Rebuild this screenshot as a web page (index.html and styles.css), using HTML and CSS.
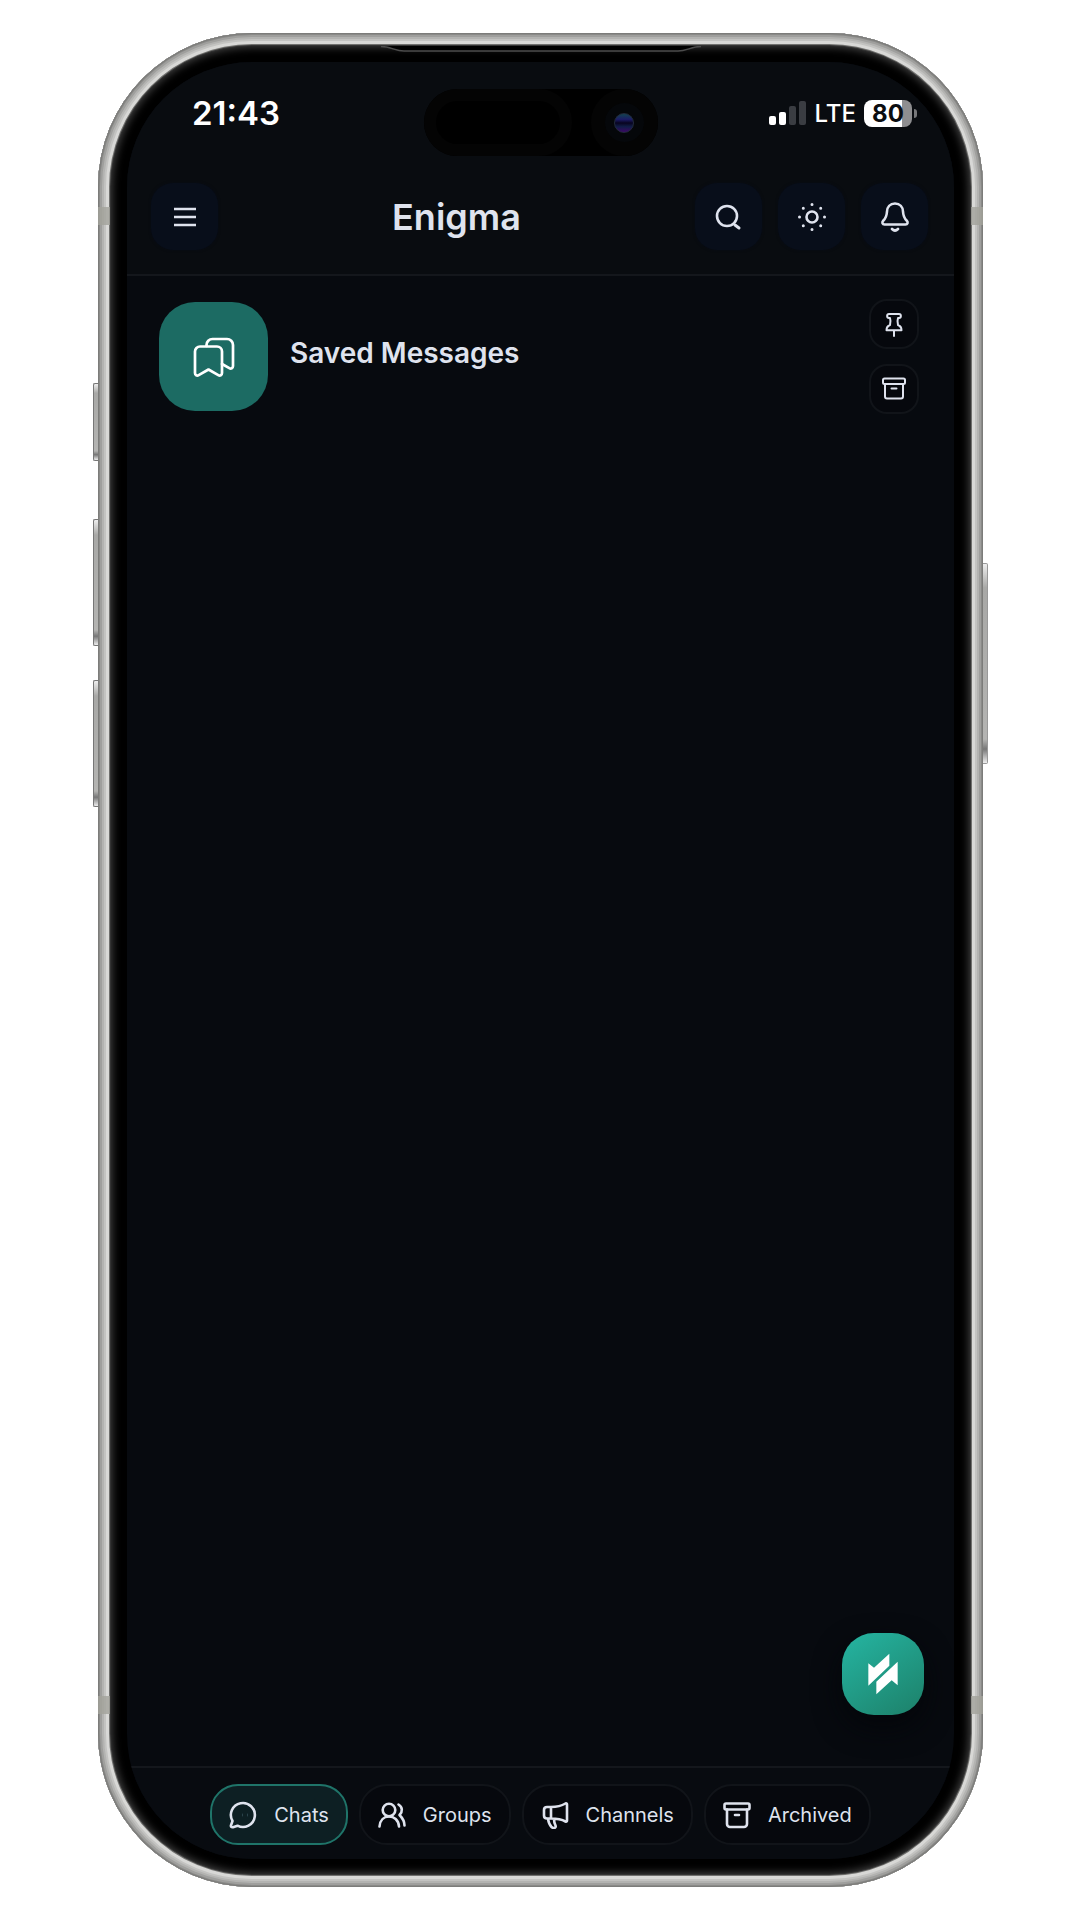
FILE: index.html
```html
<!DOCTYPE html>
<html lang="en">
<head>
<meta charset="utf-8">
<meta name="viewport" content="width=device-width, initial-scale=1">
<title>Enigma</title>
<link rel="stylesheet" href="styles.css">
</head>
<body>
<div class="phone">
  <span class="side-key side-key-action"></span>
  <span class="side-key side-key-up"></span>
  <span class="side-key side-key-down"></span>
  <span class="side-key side-key-power"></span>
  <span class="band band-top-left"></span>
  <span class="band band-top-right"></span>
  <span class="band band-bottom-left"></span>
  <span class="band band-bottom-right"></span>
  <svg class="earpiece" viewBox="0 0 320 12" aria-hidden="true">
    <path d="M0 0H320C310 0 306 5 297 5H23C14 5 10 0 0 0Z" fill="#000"/>
    <path d="M0 0.500C10 0.500 14 5 23 5H297C306 5 310 0.500 320 0.500" fill="none" stroke="#4c4c4c" stroke-width="1.5"/>
  </svg>

  <div class="screen">
    <div class="island">
      <span class="sensor"></span>
      <span class="camera"><span class="lens"></span></span>
    </div>
    <header class="top">
      <div class="status">
        <time class="clock">21:43</time>
        <div class="status-right">
          <svg class="signal" viewBox="0 0 38 26" aria-hidden="true">
            <rect x="0" y="16" width="7" height="9" rx="2" fill="#fff"/>
            <rect x="10" y="12" width="7" height="13" rx="2" fill="#fff"/>
            <rect x="20" y="6" width="7" height="19" rx="2" fill="#3a3d42"/>
            <rect x="30" y="1" width="7" height="24" rx="2" fill="#3a3d42"/>
          </svg>
          <span class="network">LTE</span>
          <span class="battery">80</span>
        </div>
      </div>
      <div class="toolbar">
        <button class="tool" type="button" aria-label="Menu">
          <svg class="icon icon-tool" viewBox="0 0 32 32"><path d="M5 8h22M5 16h22M5 24h22" stroke-linecap="butt"/></svg>
        </button>
        <h1 class="title">Enigma</h1>
        <div class="tools">
          <button class="tool" type="button" aria-label="Search">
            <svg class="icon icon-tool" viewBox="0 0 32 32"><circle cx="14" cy="15" r="10"/><path d="M22 24l4 3" stroke-width="3"/></svg>
          </button>
          <button class="tool" type="button" aria-label="Theme">
            <svg class="icon icon-tool" viewBox="0 0 32 32"><circle cx="16" cy="16" r="5.500"/><path d="M16 3.500h.01M16 28.500h.01M3.500 16h.01M28.500 16h.01M7.300 7.300h.01M24.700 7.300h.01M7.300 24.700h.01M24.700 24.700h.01" stroke-width="3"/></svg>
          </button>
          <button class="tool" type="button" aria-label="Notifications">
            <svg class="icon icon-tool" viewBox="0 0 32 32"><path d="M16 2.500C11 2.500 8.200 6 8 10.500c-.2 4.700-1.300 6.800-3.800 9.200C2.600 21.500 3.500 23.500 5.500 23.500h21c2 0 2.900-2 1.300-3.800C25.300 17.300 24.200 15.200 24 10.500 23.800 6 21 2.500 16 2.500Z"/><path d="M13 28q3 3 6 0"/></svg>
          </button>
        </div>
      </div>
    </header>

    <main class="chats">
      <article class="chat">
        <div class="avatar">
          <svg class="icon icon-avatar" viewBox="0 0 44 44"><path d="M8 11.500h17a5 5 0 0 1 5 5V38c0 2.200-2 3.200-3.700 2.100L16.500 34.500 6.700 40.100C5 41.200 3 40.200 3 38V16.500a5 5 0 0 1 5-5Z"/><path d="M14.500 11v-1a6 6 0 0 1 6-6H35a6 6 0 0 1 6 6v21c0 2.200-2 3.200-3.700 2.200L30 29"/></svg>
        </div>
        <h2 class="chat-name">Saved Messages</h2>
        <div class="chat-actions">
          <button class="action" type="button" aria-label="Pin">
            <svg class="icon icon-action" viewBox="0 0 30 30"><path d="M10 5h10c2.500 0 2.500 4 0 4h-1c-.8 2.500-.6 5 0 7 2 .8 3.500 2 3.500 5.200h-15c0-3.200 1.500-4.400 3.500-5.200.6-2 .8-4.500 0-7h-1c-2.500 0-2.500-4 0-4ZM15 21.500v5.500"/></svg>
          </button>
          <button class="action" type="button" aria-label="Archive">
            <svg class="icon icon-action" viewBox="0 0 30 30"><rect x="4" y="4.500" width="22" height="5.500" rx="1.500"/><path d="M6 10v12.500a2 2 0 0 0 2 2h14a2 2 0 0 0 2-2V10M12.500 14.500h5"/></svg>
          </button>
        </div>
      </article>
      <button class="compose" type="button" aria-label="New">
        <svg class="logo" viewBox="183 156 132 132"><path d="M205 190L222 203 268 161V197L205 257ZM229 283V245L293 185V256L275 241Z" fill="#fff"/></svg>
      </button>
    </main>

    <nav class="tabs" aria-label="Sections">
      <button class="tab tab-active" type="button">
        <svg class="icon icon-tab" viewBox="0 0 28 28"><path d="M3.500 20A12 12 0 1 1 8.500 24.700L4 26.200C2.500 26.600 1.600 25.700 2 24.200Z"/><path d="M13.500 13v2M18.500 13v2" stroke="#29424a" stroke-width="1"/></svg>
        <span>Chats</span>
      </button>
      <button class="tab" type="button">
        <svg class="icon icon-tab" viewBox="0 0 28 28"><circle cx="11" cy="9" r="6.300"/><path d="M1.500 25.500C2 19 6 15.500 11 15.500S20.500 19 21 25.500M20.500 3.500C24.500 6 25 10.500 21.500 14 24.500 17 26.500 20.500 26.500 24.500"/></svg>
        <span>Groups</span>
      </button>
      <button class="tab" type="button">
        <svg class="icon icon-tab" viewBox="0 0 28 28"><path d="M10 6H6C4 6 3 7 3 9v5.500c0 2 1 3 3 3h4ZM10 6c6 0 10-.8 14.500-3.500C25.500 2 26 2.500 26 3.500v16c0 1-.5 1.500-1.500 1C20 18 16 17.500 10 17.500M7 18c.5 3 1.500 6 3.500 8 2 2 5 1 4-1.500-1-2-1.500-4-1.500-6.500"/></svg>
        <span>Channels</span>
      </button>
      <button class="tab" type="button">
        <svg class="icon icon-tab" viewBox="0 0 28 28"><rect x="1.500" y="2.500" width="25" height="6" rx="1.500"/><path d="M4 8.500V23a3 3 0 0 0 3 3h14a3 3 0 0 0 3-3V8.500M12 14h4"/></svg>
        <span>Archived</span>
      </button>
    </nav>
  </div>
</div>
</body>
</html>
```
FILE: styles.css
```css
* {
  box-sizing: border-box;
}

body {
  margin: 0;
  padding: 33px 97px 33px 98px;
  background: #fff;
  color: #dfe3ee;
  font-family: Inter, sans-serif;
}

button {
  margin: 0;
  padding: 0;
  border: 0;
  color: inherit;
  font: inherit;
}

/* Metal frame, shaded from the outer edge inwards */
.phone {
  position: relative;
  display: flex;
  min-height: calc(100vh - 66px);
  padding: 29px 29px 28px;
  border-radius: 154px;
  background: #000;
  box-shadow:
    inset 0 0 0 1px #7c7c7a,
    inset 0 0 0 2px #8a8a88,
    inset 0 0 0 4px #9f9f9d,
    inset 0 0 0 6px #b3b3b1,
    inset 0 0 0 8px #c3c3c1,
    inset 0 0 0 11px #d8d8d6,
    inset 0 0 0 12px #70706e,
    inset 0 0 0 13px #333,
    inset 0 0 8px 14px #444;
}

.side-key {
  position: absolute;
  left: -5px;
  width: 5px;
  border: 1px solid #777;
  border-right: 0;
  border-radius: 2px 0 0 2px;
  background: linear-gradient(#eee, #a8a8a6 12%, #b4b4b2 88%, #777 93%, #eee);
}

.side-key-action { top: 350px; height: 78px; }
.side-key-up { top: 486px; height: 127px; }
.side-key-down { top: 647px; height: 127px; }

.side-key-power {
  top: 530px;
  right: -5px;
  left: auto;
  height: 201px;
  border: 1px solid #999;
  border-left: 0;
  border-radius: 0 2px 2px 0;
}

.band {
  position: absolute;
  width: 12px;
  height: 18px;
  background: #a3a39b;
  opacity: 0.8;
}

.band-top-left { top: 174px; left: 0; }
.band-top-right { top: 174px; right: 0; }
.band-bottom-left { bottom: 173px; left: 0; }
.band-bottom-right { bottom: 173px; right: 0; }

.earpiece {
  position: absolute;
  top: 13px;
  left: 50%;
  width: 320px;
  height: 12px;
  transform: translateX(-50%);
}

.screen {
  position: relative;
  display: flex;
  flex: 1;
  flex-direction: column;
  overflow: hidden;
  border-radius: 125px;
  background: #070a0f;
}

.island {
  position: absolute;
  top: 27px;
  left: 50%;
  display: flex;
  justify-content: space-between;
  width: 234px;
  height: 67px;
  border-radius: 34px;
  background: #000;
  transform: translateX(-50%);
}

.sensor {
  width: 148px;
  border: 12px solid #040404;
  border-radius: 34px;
}

.camera {
  display: grid;
  place-items: center;
  width: 67px;
  border: 14px solid #040404;
  border-radius: 34px;
  background: #05070a;
}

.lens {
  width: 20px;
  height: 20px;
  border: 1px solid #222a3c;
  border-radius: 10px;
  background: linear-gradient(#12424f, #1c1c66 30%, #08041f 50%, #101c46 70%, #3c0866);
}

.top {
  border-bottom: 2px solid #14171c;
  background: #090c10;
}

.status {
  display: flex;
  align-items: center;
  justify-content: space-between;
  height: 102px;
  padding: 0 42px 0 65px;
  color: #fff;
}

.clock {
  font-size: 33px;
  font-weight: 600;
}

.status-right {
  display: flex;
  align-items: center;
  gap: 8px;
}

.signal {
  width: 38px;
  height: 26px;
}

.network {
  font-size: 24px;
  font-weight: 500;
}

.battery {
  position: relative;
  width: 48px;
  height: 27px;
  border-radius: 8px;
  background: linear-gradient(90deg, #fff 80%, #8e8e90 80%);
  color: #0b0d10;
  font-size: 24px;
  font-weight: 700;
  line-height: 27px;
  text-align: center;
}

.battery::after {
  position: absolute;
  top: 9px;
  right: -5px;
  width: 3px;
  height: 9px;
  border-radius: 0 4px 4px 0;
  background: #77787a;
  content: "";
}

.toolbar {
  display: flex;
  align-items: center;
  padding: 19px 26px 24px 24px;
}

.title {
  flex: 1;
  margin: 0;
  font-size: 36px;
  font-weight: 600;
  line-height: 44px;
  text-align: center;
}

.tools {
  display: flex;
  gap: 16px;
}

.tool {
  display: grid;
  place-items: center;
  width: 67px;
  height: 67px;
  border-radius: 22px;
  background: #080e1a;
  box-shadow: 0 0 3px #080c15;
}

.icon {
  display: block;
  fill: none;
  stroke: currentColor;
  stroke-linecap: round;
  stroke-linejoin: round;
  stroke-width: 2;
}

.icon-tool {
  width: 32px;
  height: 32px;
  stroke-width: 2.600;
}

.icon-avatar {
  width: 44px;
  height: 44px;
  stroke-width: 2.700;
}

.icon-action {
  width: 30px;
  height: 30px;
}

.icon-tab {
  width: 28px;
  height: 28px;
  stroke-width: 2.600;
}

.chats {
  display: flex;
  flex: 1;
  flex-direction: column;
  padding: 8px 12px 51px;
}

.chat {
  display: flex;
  align-items: center;
  gap: 22px;
  padding: 15px 23px 15px 20px;
}

.avatar {
  display: grid;
  place-items: center;
  width: 109px;
  height: 109px;
  border-radius: 36px;
  background: #1c6b63;
  color: #fff;
}

.chat-name {
  flex: 1;
  margin: 0;
  padding-bottom: 8px;
  font-size: 28px;
  font-weight: 600;
  line-height: 36px;
}

.chat-actions {
  display: grid;
  gap: 15px;
}

.action {
  display: grid;
  place-items: center;
  width: 50px;
  height: 50px;
  border: 2px solid #111419;
  border-radius: 18px;
  background: #06080d;
}

.compose {
  display: grid;
  place-items: center;
  align-self: flex-end;
  width: 82px;
  height: 82px;
  margin: auto 18px 0 0;
  border-radius: 32px;
  background: linear-gradient(145deg, #25b5a2, #1d8069);
  box-shadow: 0 12px 28px #04060a;
}

.logo {
  width: 44px;
  height: 44px;
}

.tabs {
  display: flex;
  justify-content: center;
  gap: 11px;
  padding: 16px 12px 14px;
  border-top: 2px solid #14171c;
  background: #080b10;
}

.tab {
  display: flex;
  align-items: center;
  gap: 17px;
  height: 61px;
  padding: 0 17px;
  border: 2px solid #111419;
  border-radius: 28px;
  background: #06080d;
  font-size: 20px;
}

.tab-active {
  border-color: #1f7469;
  background: #0d1f23;
}
```
